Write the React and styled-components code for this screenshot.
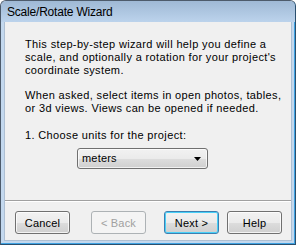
import React from 'react'
import styled, { createGlobalStyle } from 'styled-components'

const Global = createGlobalStyle`
  html, body {
    margin: 0;
    padding: 0;
    background: #ffffff;
  }
  * {
    box-sizing: border-box;
  }
`

const Window = styled.div`
  width: 296px;
  height: 245px;
  display: flex;
  flex-direction: column;
  border: 1px solid #4d5b6b;
  border-right-color: #2b4f6e;
  border-bottom-color: #2b4f6e;
  border-radius: 6px 6px 0 0;
  background: #c3d8ee;
  box-shadow: inset -1px -1px 0 #3fa3e3;
  padding: 0 3px 3px 3px;
  font-family: "Liberation Sans", Arial, sans-serif;
`

const TitleBar = styled.div`
  height: 21px;
  margin: 0 -3px;
  padding: 0 0 0 6px;
  display: flex;
  align-items: center;
  border-radius: 5px 5px 0 0;
  background: linear-gradient(#9fb9d5, #bcd3ec);
  font-size: 12px;
  letter-spacing: -0.2px;
  color: #000;
`

const Client = styled.div`
  flex: 1;
  display: flex;
  flex-direction: column;
  background: #f0f0f0;
  border: 1px solid #aebfd2;
  border-top: none;
`

const Body = styled.div`
  flex: 1;
  padding: 16px 0 0 20px;
  font-size: 11px;
  line-height: 13px;
  letter-spacing: 0.36px;
  color: #000;
`

const Para = styled.p`
  margin: 0 0 ${p => p.gap || 12}px 0;
`

const Select = styled.div`
  margin: -6px 0 0 52px;
  width: 131px;
  height: 21px;
  display: flex;
  align-items: center;
  justify-content: space-between;
  padding: 0 6px 0 4px;
  border: 1px solid #707070;
  border-radius: 3px;
  background: linear-gradient(#f2f2f2 0%, #ebebeb 50%, #dddddd 51%, #cfcfcf 100%);
  box-shadow: inset 0 0 0 1px rgba(255, 255, 255, 0.7);
  font-size: 11px;
  letter-spacing: 0.2px;
`

const Arrow = styled.svg`
  width: 7px;
  height: 4px;
`

const Separator = styled.div`
  height: 2px;
  border-top: 1px solid #a0a0a0;
  border-bottom: 1px solid #ffffff;
`

const ButtonRow = styled.div`
  display: flex;
  padding: 9px 9px 6px 10px;
`

const Button = styled.button`
  width: 55px;
  height: 23px;
  margin-left: ${p => p.left || 0}px;
  padding: 0;
  border: 1px solid ${p => (p.focused ? '#3c7fb1' : p.disabled ? '#adb2b5' : '#707070')};
  border-radius: 3px;
  background: ${p =>
    p.disabled
      ? '#f4f4f4'
      : 'linear-gradient(#f2f2f2 0%, #ebebeb 50%, #dddddd 51%, #cfcfcf 100%)'};
  box-shadow: ${p =>
    p.focused
      ? 'inset 0 0 0 1px #48d0f8'
      : p.disabled
      ? 'none'
      : 'inset 0 0 0 1px rgba(255, 255, 255, 0.75)'};
  font-family: "Liberation Sans", Arial, sans-serif;
  font-size: 11px;
  letter-spacing: 0.2px;
  color: ${p => (p.disabled ? '#a0a0a0' : '#000')};
`

export default function App() {
  return (
    <>
      <Global />
      <Window>
        <TitleBar>Scale/Rotate Wizard</TitleBar>
        <Client>
          <Body>
            <Para>
              This step-by-step wizard will help you define a<br />
              scale, and optionally a rotation for your project's<br />
              coordinate system.
            </Para>
            <Para gap={14}>
              When asked, select items in open photos, tables,<br />
              or 3d views. Views can be opened if needed.
            </Para>
            <Para gap={12}>1. Choose units for the project:</Para>
            <Select>
              <span>meters</span>
              <Arrow viewBox="0 0 7 4">
                <path d="M0 0h7L3.5 4z" fill="#000" />
              </Arrow>
            </Select>
          </Body>
          <Separator />
          <ButtonRow>
            <Button>Cancel</Button>
            <Button left={21} disabled>&lt; Back</Button>
            <Button left={18} focused>Next &gt;</Button>
            <Button left={8}>Help</Button>
          </ButtonRow>
        </Client>
      </Window>
    </>
  )
}
